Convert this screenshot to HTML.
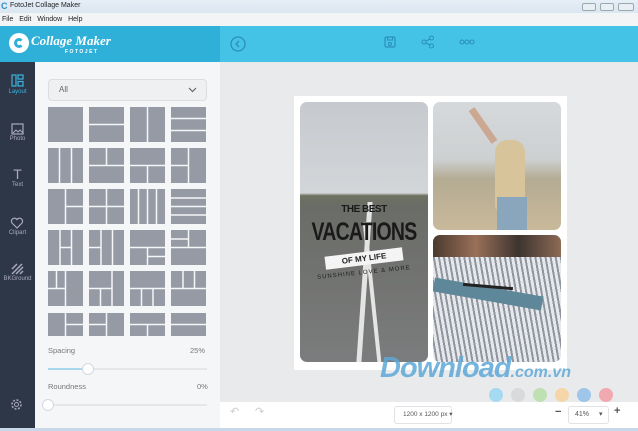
<!DOCTYPE html>
<html><head><meta charset="utf-8"><style>
*{margin:0;padding:0;box-sizing:border-box}
body{width:638px;height:431px;overflow:hidden;font-family:"Liberation Sans",sans-serif;background:#e9eaec;position:relative}
.a{position:absolute;white-space:nowrap}
</style></head><body>
<div class="a" style="left:0;top:0;width:638px;height:13px;background:linear-gradient(#e6eef6,#dbe6f1)"></div>
<div class="a" style="left:1px;top:1px;font-size:9px;font-weight:bold;color:#2a8fc6">C</div>
<div class="a" style="left:10px;top:2px;font-size:7px;color:#222">FotoJet Collage Maker</div>
<div class="a" style="left:582px;top:3px;width:14px;height:8px;border:1px solid #9aa;background:#e8eef4;border-radius:2px"></div>
<div class="a" style="left:600px;top:3px;width:14px;height:8px;border:1px solid #9aa;background:#e8eef4;border-radius:2px"></div>
<div class="a" style="left:618px;top:3px;width:16px;height:8px;border:1px solid #9aa;background:#e8eef4;border-radius:2px"></div>
<div class="a" style="left:0;top:13px;width:638px;height:13px;background:#f3f4f6"></div>
<div class="a" style="left:2px;top:16px;font-size:7px;color:#222;word-spacing:4px">File Edit Window Help</div>
<div class="a" style="left:0;top:26px;width:220px;height:36px;background:#2fb0d8"></div>
<div class="a" style="left:220px;top:26px;width:418px;height:36px;background:#44c3e6"></div>
<div class="a" style="left:9px;top:33px;width:20px;height:20px;border-radius:50%;background:#fff"></div>
<div class="a" style="left:14px;top:38px;width:10px;height:10px;border-radius:50%;border:3px solid #2fb0d8;border-right-color:transparent"></div>
<div class="a" style="left:31px;top:33px;font-family:'Liberation Serif',serif;font-style:italic;font-weight:bold;font-size:13px;color:#fff">Collage Maker</div>
<div class="a" style="left:65px;top:49px;font-size:5px;letter-spacing:1.5px;color:#fff;font-weight:bold">FOTOJET</div>
<svg class="a" style="left:229px;top:35px" width="18" height="18"><circle cx="9" cy="9" r="7" fill="none" stroke="#2a8fb8" stroke-width="1.3"/><path d="M10 6l-3 3 3 3" fill="none" stroke="#2a8fb8" stroke-width="1.3"/></svg>
<svg class="a" style="left:383px;top:35px" width="14" height="14"><rect x="2" y="2" width="10" height="10" rx="1.5" fill="none" stroke="#2a8fb8" stroke-width="1.2"/><rect x="4.5" y="2" width="5" height="3" fill="none" stroke="#2a8fb8"/><circle cx="7" cy="9" r="1.5" fill="none" stroke="#2a8fb8"/></svg>
<svg class="a" style="left:421px;top:35px" width="14" height="14"><circle cx="3" cy="7" r="2" fill="none" stroke="#2a8fb8"/><circle cx="10.5" cy="3" r="2" fill="none" stroke="#2a8fb8"/><circle cx="10.5" cy="11" r="2" fill="none" stroke="#2a8fb8"/><path d="M5 6l4-2M5 8l4 2" stroke="#2a8fb8"/></svg>
<svg class="a" style="left:459px;top:38px" width="16" height="8"><circle cx="3" cy="4" r="2" fill="none" stroke="#2a8fb8"/><circle cx="8" cy="4" r="2" fill="none" stroke="#2a8fb8"/><circle cx="13" cy="4" r="2" fill="none" stroke="#2a8fb8"/></svg>
<div class="a" style="left:0;top:62px;width:35px;height:369px;background:#2d3748"></div>
<div class="a" style="left:29px;top:75px;width:0;height:0;border:6px solid transparent;border-right-color:#f5f6f8"></div>
<svg class="a" style="left:11px;top:74px" width="13" height="13"><rect x="1" y="1" width="4" height="11" fill="none" stroke="#3bb4e0" stroke-width="1.2"/><rect x="7" y="1" width="5" height="4" fill="none" stroke="#3bb4e0" stroke-width="1.2"/><rect x="7" y="7.5" width="5" height="4.5" fill="none" stroke="#3bb4e0" stroke-width="1.2"/></svg>
<div class="a" style="left:0;top:89px;width:35px;text-align:center;font-size:6px;color:#3bb4e0">Layout</div>
<svg class="a" style="left:11px;top:123px" width="13" height="12"><rect x="1" y="1" width="11" height="10" fill="none" stroke="#aab" stroke-width="1.2"/><path d="M2 10l3-3 2 2 2-2 3 3" fill="none" stroke="#aab"/></svg>
<div class="a" style="left:0;top:136px;width:35px;text-align:center;font-size:6px;color:#aab">Photo</div>
<div class="a" style="left:0;top:166px;width:35px;text-align:center;font-size:14px;color:#aab">T</div>
<div class="a" style="left:0;top:182px;width:35px;text-align:center;font-size:6px;color:#aab">Text</div>
<svg class="a" style="left:10px;top:217px" width="14" height="12"><path d="M7 11L2 6A2.8 2.8 0 0 1 7 2.5A2.8 2.8 0 0 1 12 6Z" fill="none" stroke="#aab" stroke-width="1.2"/></svg>
<div class="a" style="left:0;top:230px;width:35px;text-align:center;font-size:6px;color:#aab">Clipart</div>
<svg class="a" style="left:11px;top:263px" width="13" height="12"><path d="M1 6L6 1M1 11L11 1M5 11L12 4M9 11L12 8" stroke="#aab" stroke-width="1.5"/></svg>
<div class="a" style="left:0;top:276px;width:35px;text-align:center;font-size:6px;color:#aab">BKGround</div>
<svg class="a" style="left:10px;top:398px" width="13" height="13"><circle cx="6.5" cy="6.5" r="2" fill="none" stroke="#aab"/><circle cx="6.5" cy="6.5" r="4.5" fill="none" stroke="#aab" stroke-width="1.5" stroke-dasharray="2 1.5"/></svg>
<div class="a" style="left:35px;top:62px;width:185px;height:366px;background:#f5f6f8"></div>
<div class="a" style="left:48px;top:79px;width:159px;height:22px;background:#eef0f2;border:1px solid #dadde1;border-radius:4px"></div>
<div class="a" style="left:59px;top:85px;font-size:8px;color:#666">All</div>
<svg class="a" style="left:188px;top:87px" width="9" height="6"><path d="M1 1l3.5 3.5L8 1" fill="none" stroke="#666" stroke-width="1.2"/></svg>
<svg class="a" style="left:48px;top:107px" width="159" height="229">
<g fill="#959aa4">
<rect x="0" y="0" width="35" height="35"/><rect x="41" y="0" width="35" height="35"/><rect x="82" y="0" width="35" height="35"/><rect x="123" y="0" width="35" height="35"/>
<rect x="0" y="41" width="35" height="35"/><rect x="41" y="41" width="35" height="35"/><rect x="82" y="41" width="35" height="35"/><rect x="123" y="41" width="35" height="35"/>
<rect x="0" y="82" width="35" height="35"/><rect x="41" y="82" width="35" height="35"/><rect x="82" y="82" width="35" height="35"/><rect x="123" y="82" width="35" height="35"/>
<rect x="0" y="123" width="35" height="35"/><rect x="41" y="123" width="35" height="35"/><rect x="82" y="123" width="35" height="35"/><rect x="123" y="123" width="35" height="35"/>
<rect x="0" y="164" width="35" height="35"/><rect x="41" y="164" width="35" height="35"/><rect x="82" y="164" width="35" height="35"/><rect x="123" y="164" width="35" height="35"/>
<rect x="0" y="206" width="35" height="23"/><rect x="41" y="206" width="35" height="23"/><rect x="82" y="206" width="35" height="23"/><rect x="123" y="206" width="35" height="23"/>
</g>
<g stroke="#f5f6f8" stroke-width="1.5">
<path d="M41 17.5h35M99.5 0v35M123 11.5h35M123 23.5h35"/>
<path d="M11.5 41v35M23.5 41v35M41 58.5h35M58.5 41v17M82 58.5h35M99.5 58.5v17.5M140.5 41v35M123 58.5h17"/>
<path d="M17.5 82v35M17.5 99.5h17.5M41 99.5h35M58.5 82v35M90.5 82v35M99.5 82v35M108.5 82v35M123 91h35M123 99.5h35M123 108h35"/>
<path d="M12 123v35M23.5 123v35M12 140.5h11.5M53 123v35M64.5 123v35M41 140.5h12M82 140.5h35M99.5 140.5v17.5M99.5 149.5h17.5M123 140.5h35M140.5 123v17.5M123 132h17.5"/>
<path d="M17.5 164v35M0 181.5h17.5M8.5 164v17.5M64 164v35M41 181.5h23M52.5 181.5v17.5M82 181.5h35M93.5 181.5v17.5M105 181.5v17.5M123 181.5h35M135 164v17.5M146.5 164v17.5"/>
<path d="M17.5 206v23M17.5 217.5h17.5M58.5 206v23M41 217.5h17.5M82 217.5h35M99.5 217.5v12M123 217.5h35"/>
</g></svg>
<div class="a" style="left:48px;top:346px;font-size:7.5px;color:#777">Spacing</div>
<div class="a" style="left:190px;top:346px;font-size:7.5px;color:#777">25%</div>
<div class="a" style="left:48px;top:368px;width:159px;height:2px;background:#e4e6e9"></div>
<div class="a" style="left:48px;top:368px;width:40px;height:2px;background:#a7d8ee"></div>
<div class="a" style="left:82px;top:363px;width:12px;height:12px;border-radius:50%;background:#fff;border:1px solid #d5d8dc"></div>
<div class="a" style="left:48px;top:382px;font-size:7.5px;color:#777">Roundness</div>
<div class="a" style="left:197px;top:382px;font-size:7.5px;color:#777">0%</div>
<div class="a" style="left:48px;top:404px;width:159px;height:2px;background:#e4e6e9"></div>
<div class="a" style="left:42px;top:399px;width:12px;height:12px;border-radius:50%;background:#fff;border:1px solid #d5d8dc"></div>
<div class="a" style="left:294px;top:96px;width:273px;height:274px;background:#fff"></div>
<div class="a" style="left:300px;top:102px;width:128px;height:260px;border-radius:7px;overflow:hidden;background:linear-gradient(#c6c9cd 0%,#d3d6d9 35%,#6e7260 36%,#6a6c67 40%,#7b7c7d 100%)">
 <div class="a" style="left:62px;top:100px;width:5px;height:160px;background:#e4e4e4;transform:skewX(-4deg)"></div>
 <div class="a" style="left:70px;top:120px;width:4px;height:140px;background:#e4e4e4;transform:skewX(6deg)"></div>
 <div class="a" style="left:0;top:102px;width:128px;text-align:center;font-size:10px;font-weight:bold;color:#1a1a1a;letter-spacing:-0.5px">THE BEST</div>
 <div class="a" style="left:4px;top:116px;width:120px;text-align:center;font-size:25px;font-weight:bold;color:#1a1a1a;transform:scaleX(0.78);transform-origin:center;letter-spacing:-1px;display:flex;justify-content:center">VACATIONS</div>
 <div class="a" style="left:25px;top:150px;width:78px;height:13px;background:#f4f4f4;transform:rotate(-7deg);text-align:center;font-size:8px;font-weight:bold;color:#222;line-height:13px">OF MY LIFE</div>
 <div class="a" style="left:0;top:168px;width:128px;text-align:center;font-size:6px;letter-spacing:1px;color:#222;transform:rotate(-6deg)">SUNSHINE LOVE &amp; MORE</div>
</div>
<div class="a" style="left:433px;top:102px;width:128px;height:128px;border-radius:7px;overflow:hidden;background:linear-gradient(#d6d9dc 0%,#cdd0d1 45%,#b4ab93 60%,#c9b99a 100%)">
 <div class="a" style="left:62px;top:38px;width:30px;height:70px;background:#d8c49a;border-radius:12px 12px 4px 4px"></div>
 <div class="a" style="left:64px;top:95px;width:30px;height:33px;background:#8aa6bd"></div>
 <div class="a" style="left:30px;top:20px;width:40px;height:7px;background:#caa892;transform:rotate(55deg)"></div>
</div>
<div class="a" style="left:433px;top:235px;width:128px;height:127px;border-radius:7px;overflow:hidden;background:repeating-linear-gradient(80deg,#e6e8ec 0 3px,#8f96a0 3px 5px)">
 <div class="a" style="left:0;top:0;width:128px;height:22px;background:linear-gradient(90deg,#4a3a30,#9a7058,#3d3430,#8d6a55)"></div>
 <div class="a" style="left:0;top:52px;width:110px;height:14px;background:#5e8799;transform:rotate(10deg)"></div>
 <div class="a" style="left:30px;top:50px;width:50px;height:3px;background:#222;transform:rotate(5deg)"></div>
</div>
<div class="a" style="left:380px;top:352px;font-size:29px;font-weight:bold;font-style:italic;color:#5ea9d8;letter-spacing:-1px;opacity:.85">Download<span style="font-size:16px;letter-spacing:0">.com.vn</span></div>
<div class="a" style="left:489px;top:388px;width:14px;height:14px;border-radius:50%;background:#a6d9f2"></div>
<div class="a" style="left:511px;top:388px;width:14px;height:14px;border-radius:50%;background:#d9dadc"></div>
<div class="a" style="left:533px;top:388px;width:14px;height:14px;border-radius:50%;background:#bfe0b0"></div>
<div class="a" style="left:555px;top:388px;width:14px;height:14px;border-radius:50%;background:#f4d6a8"></div>
<div class="a" style="left:577px;top:388px;width:14px;height:14px;border-radius:50%;background:#9fc5e8"></div>
<div class="a" style="left:599px;top:388px;width:14px;height:14px;border-radius:50%;background:#f0a9ae"></div>
<div class="a" style="left:220px;top:402px;width:418px;height:26px;background:#fff"></div>
<div class="a" style="left:0;top:428px;width:638px;height:3px;background:#c9d8e8"></div>
<div class="a" style="left:230px;top:405px;font-size:11px;color:#ccc">↶</div>
<div class="a" style="left:255px;top:405px;font-size:11px;color:#ccc">↷</div>
<div class="a" style="left:394px;top:406px;width:58px;height:18px;border:1px solid #e0e2e5;border-radius:3px;font-size:6.5px;color:#555;line-height:16px;padding-left:8px">1200 x 1200 px ▾</div>
<div class="a" style="left:555px;top:406px;font-size:11px;color:#555;font-weight:bold">−</div>
<div class="a" style="left:568px;top:406px;width:41px;height:18px;border:1px solid #e0e2e5;border-radius:3px;font-size:7px;color:#555;line-height:16px;padding-left:6px">41% <span style="margin-left:8px">▾</span></div>
<div class="a" style="left:614px;top:405px;font-size:11px;color:#555;font-weight:bold">+</div>
</body></html>
